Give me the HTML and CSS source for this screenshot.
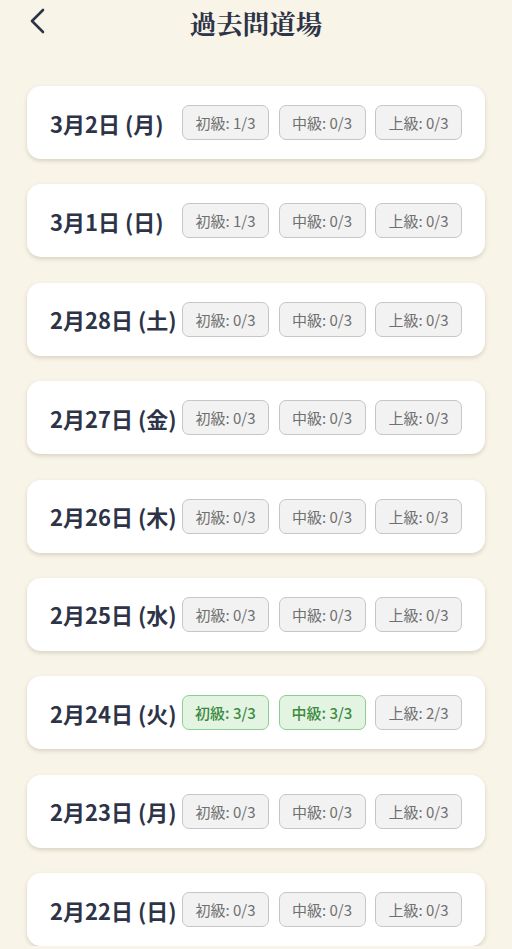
FILE: index.html
```html
<!DOCTYPE html>
<html lang="ja">
<head>
  <meta charset="UTF-8" />
  <meta name="viewport" content="width=device-width, initial-scale=1.0" />
  <title>過去問道場</title>
  <link rel="stylesheet" href="styles.css">
</head>
<body>

  <div class="header">
    <button class="back-button" aria-label="戻る">
      <svg width="20" height="26" viewBox="0 0 20 26">
        <path d="M15 2 L4 13 L15 24" fill="none" stroke="#2e3448" stroke-width="2.6" stroke-linecap="round" stroke-linejoin="round" />
      </svg>
    </button>
    <h1 class="title">過去問道場</h1>
  </div>

  <div class="day-list">
    <div class="day-card">
      <span class="day-label">3月2日 (月)</span>
      <div class="levels">
        <span class="level">初級: 1/3</span>
        <span class="level">中級: 0/3</span>
        <span class="level">上級: 0/3</span>
      </div>
    </div>
    <div class="day-card">
      <span class="day-label">3月1日 (日)</span>
      <div class="levels">
        <span class="level">初級: 1/3</span>
        <span class="level">中級: 0/3</span>
        <span class="level">上級: 0/3</span>
      </div>
    </div>
    <div class="day-card">
      <span class="day-label">2月28日 (土)</span>
      <div class="levels">
        <span class="level">初級: 0/3</span>
        <span class="level">中級: 0/3</span>
        <span class="level">上級: 0/3</span>
      </div>
    </div>
    <div class="day-card">
      <span class="day-label">2月27日 (金)</span>
      <div class="levels">
        <span class="level">初級: 0/3</span>
        <span class="level">中級: 0/3</span>
        <span class="level">上級: 0/3</span>
      </div>
    </div>
    <div class="day-card">
      <span class="day-label">2月26日 (木)</span>
      <div class="levels">
        <span class="level">初級: 0/3</span>
        <span class="level">中級: 0/3</span>
        <span class="level">上級: 0/3</span>
      </div>
    </div>
    <div class="day-card">
      <span class="day-label">2月25日 (水)</span>
      <div class="levels">
        <span class="level">初級: 0/3</span>
        <span class="level">中級: 0/3</span>
        <span class="level">上級: 0/3</span>
      </div>
    </div>
    <div class="day-card">
      <span class="day-label">2月24日 (火)</span>
      <div class="levels">
        <span class="level done">初級: 3/3</span>
        <span class="level done">中級: 3/3</span>
        <span class="level">上級: 2/3</span>
      </div>
    </div>
    <div class="day-card">
      <span class="day-label">2月23日 (月)</span>
      <div class="levels">
        <span class="level">初級: 0/3</span>
        <span class="level">中級: 0/3</span>
        <span class="level">上級: 0/3</span>
      </div>
    </div>
    <div class="day-card">
      <span class="day-label">2月22日 (日)</span>
      <div class="levels">
        <span class="level">初級: 0/3</span>
        <span class="level">中級: 0/3</span>
        <span class="level">上級: 0/3</span>
      </div>
    </div>
  </div>

</body>
</html>
```

FILE: styles.css
```css
body {
  font-family: 'Noto Sans CJK JP', 'Noto Sans', sans-serif;
  background: #f8f4e7;
  margin: 0;
  color: #2e3448;
  overflow: hidden;
}

.header {
  position: relative;
  height: 44px;
  display: flex;
  align-items: center;
  justify-content: center;
}

.back-button {
  position: absolute;
  left: 28px;
  top: 8px;
  background: none;
  border: none;
  padding: 0;
  cursor: pointer;
}

.title {
  margin: 0;
  font-family: 'Noto Serif CJK JP', 'Noto Sans CJK JP', serif;
  font-size: 26.5px;
  font-weight: 700;
  color: #2e3448;
}

.day-list {
  display: flex;
  flex-direction: column;
  gap: 25.4px;
  padding: 42px 27px 0;
}

.day-card {
  height: 73px;
  box-sizing: border-box;
  display: flex;
  align-items: center;
  justify-content: space-between;
  padding: 0 23px;
  background: #ffffff;
  border-radius: 14px;
  box-shadow: 0 2px 4px rgba(90, 80, 50, 0.2);
}

.day-label {
  font-size: 22px;
  font-weight: 700;
  white-space: nowrap;
}

.levels {
  display: flex;
  gap: 9.5px;
}

.level {
  width: 87px;
  height: 35px;
  box-sizing: border-box;
  display: flex;
  align-items: center;
  justify-content: center;
  font-size: 15px;
  color: #707070;
  background: #f2f2f2;
  border: 1px solid #c6c6c6;
  border-radius: 7px;
}

.level.done {
  color: #3b8a40;
  background: #e4f4e3;
  border-color: #8ccf90;
  font-weight: 500;
}
```
